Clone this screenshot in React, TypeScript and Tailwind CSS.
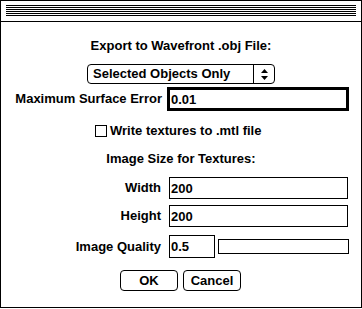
const font = { fontFamily: '"Liberation Sans", Arial, sans-serif' };

function PopupArrows() {
	return (
		<svg width="7" height="11" viewBox="0 0 7 11" className="block">
			<path d="M3.5 0 L7 4 L0 4 Z" fill="black" />
			<path d="M0 7 L7 7 L3.5 11 Z" fill="black" />
		</svg>
	);
}

function Field({ value, className }: { value?: string; className: string }) {
	return (
		<div className={`flex items-center border-black bg-white ${className}`}>
			<span className="leading-none">{value}</span>
		</div>
	);
}

export default function App() {
	return (
		<div
			className="h-[309px] w-[362px] bg-white text-[13px] font-bold text-black"
			style={font}
		>
			<div className="flex h-[308px] w-[362px] flex-col border border-black">
				{/* title bar */}
				<div className="h-[21px] border-b border-black px-[5px] pt-[4px]">
					<div className="flex flex-col gap-px">
						<div className="h-px bg-black" />
						<div className="h-px bg-black" />
						<div className="h-px bg-black" />
						<div className="h-px bg-black" />
						<div className="h-px bg-black" />
						<div className="h-px bg-black" />
					</div>
				</div>

				<div className="flex flex-col">
					<p className="mt-[16px] h-[16px] text-center leading-[16px]">
						Export to Wavefront .obj File:
					</p>

					<div className="mt-[10px] ml-[86px] flex h-[20px] w-[188px] items-center rounded-[4px] border border-black">
						<span className="flex-1 pl-[5px] leading-[16px]">
							Selected Objects Only
						</span>
						<div className="flex h-full w-[21px] items-center justify-center border-l border-black">
							<PopupArrows />
						</div>
					</div>

					<div className="mt-[3px] flex h-[24px] items-center">
						<span className="w-[161px] text-right leading-[16px]">
							Maximum Surface Error
						</span>
						<Field
							value="0.01"
							className="ml-[5px] h-[24px] w-[182px] border-[3px] pl-[1px]"
						/>
					</div>

					<div className="mt-[12px] ml-[94px] flex h-[16px] items-center">
						<div className="h-[12px] w-[12px] border border-black" />
						<span className="ml-[3px] leading-[16px]">
							Write textures to .mtl file
						</span>
					</div>

					<p className="mt-[12px] h-[16px] text-center leading-[16px]">
						Image Size for Textures:
					</p>

					<div className="mt-[10px] flex h-[22px] items-center">
						<span className="w-[160px] text-right leading-[16px]">Width</span>
						<Field
							value="200"
							className="ml-[8px] h-[22px] w-[179px] border pl-[1px]"
						/>
					</div>

					<div className="mt-[6px] flex h-[22px] items-center">
						<span className="w-[160px] text-right leading-[16px]">Height</span>
						<Field
							value="200"
							className="ml-[8px] h-[22px] w-[179px] border pl-[1px]"
						/>
					</div>

					<div className="mt-[8px] flex h-[23px] items-center">
						<span className="w-[160px] text-right leading-[16px]">
							Image Quality
						</span>
						<Field
							value="0.5"
							className="ml-[8px] h-[23px] w-[46px] border pl-[1px]"
						/>
						<div className="ml-[3px] h-[15px] w-[131px] border border-black" />
					</div>

					<div className="mt-[12px] ml-[119px] flex gap-[5px]">
						<button className="flex h-[21px] w-[58px] items-center justify-center rounded-[4px] border border-black leading-none">
							OK
						</button>
						<button className="flex h-[21px] w-[58px] items-center justify-center rounded-[4px] border border-black leading-none">
							Cancel
						</button>
					</div>
				</div>
			</div>
		</div>
	);
}
